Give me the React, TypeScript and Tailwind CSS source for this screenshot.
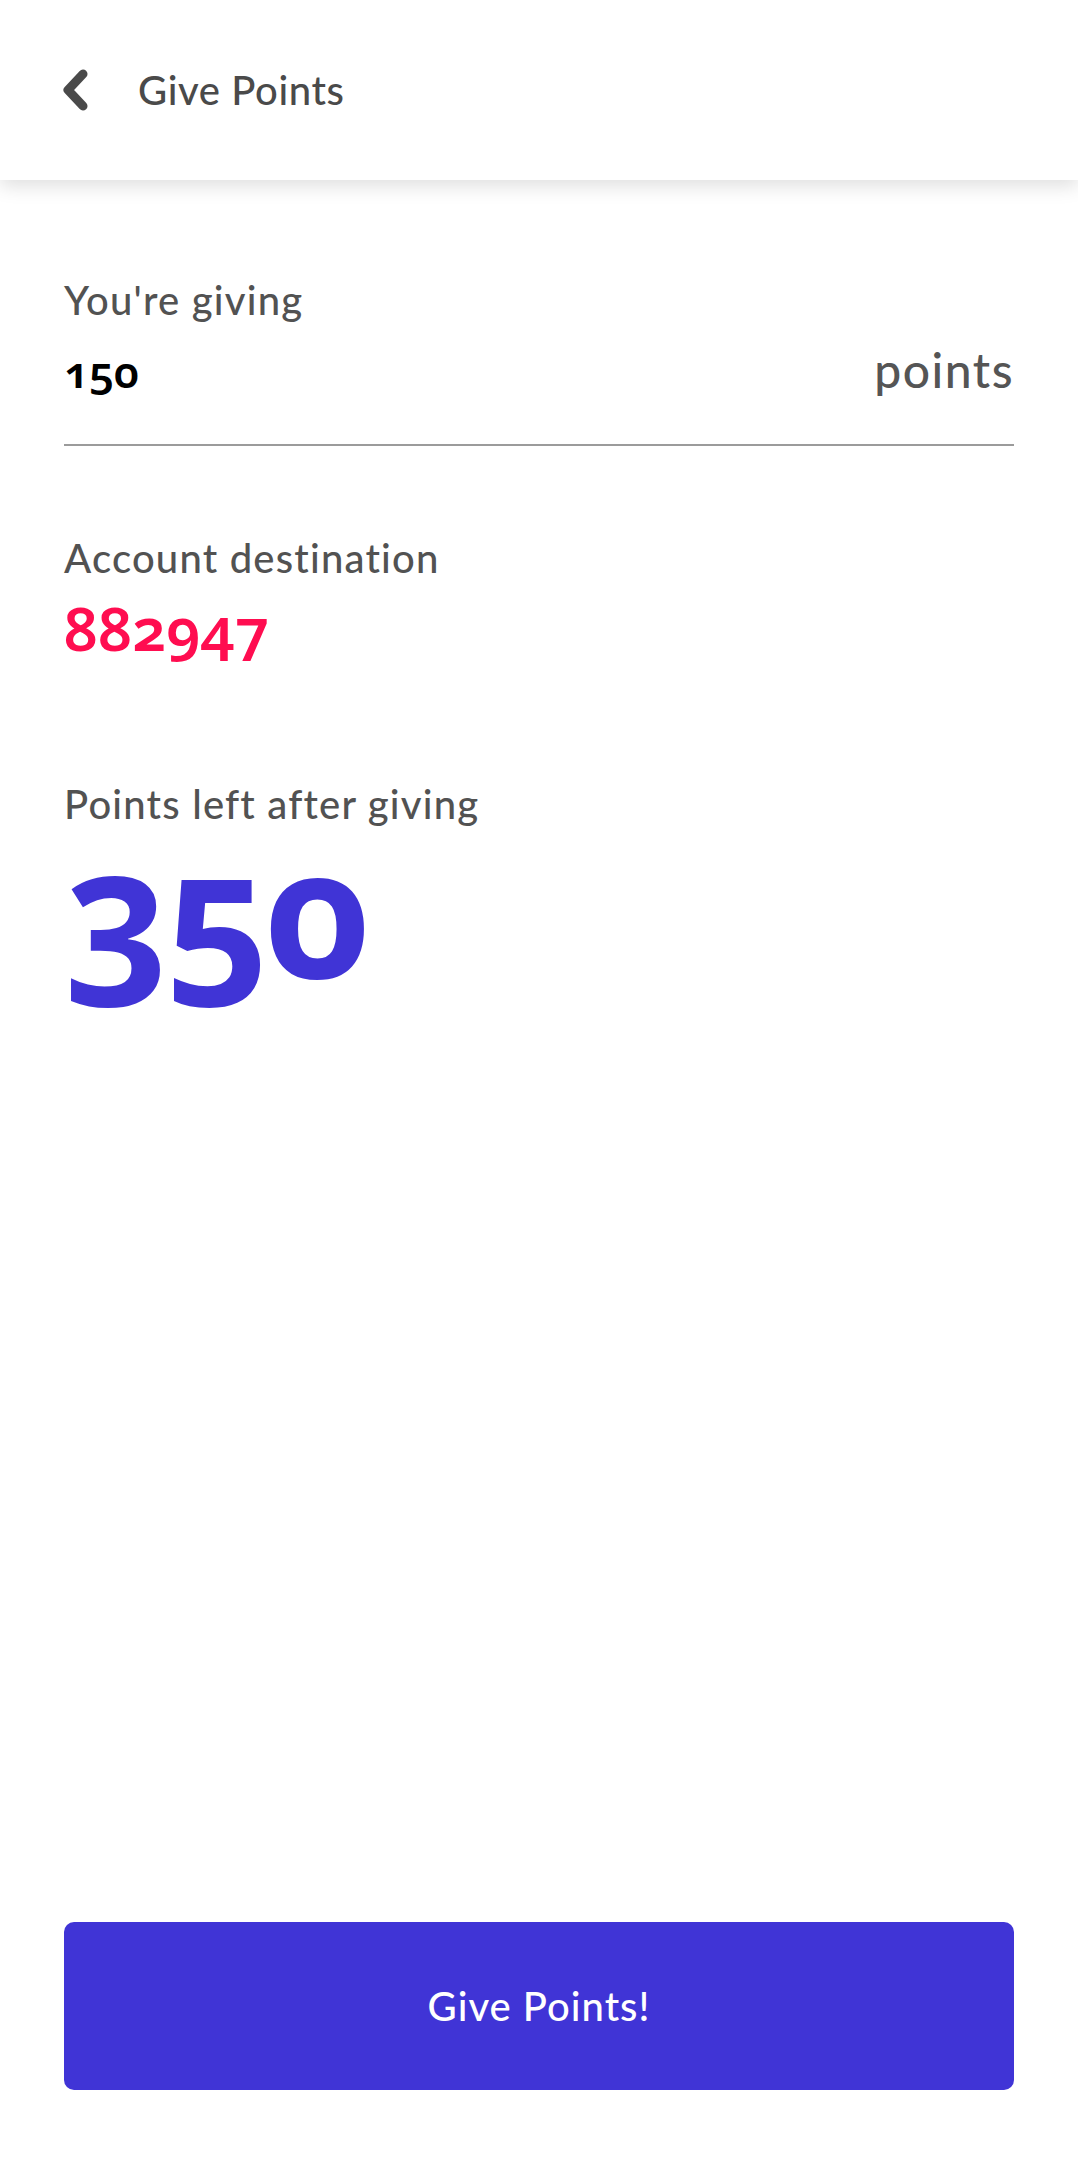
import React from 'react';

const ChevronLeft = () => (
  <svg width="28" height="44" viewBox="0 0 28 44" fill="none">
    <polyline
      points="21,6 6,22 21,38"
      stroke="#4a4a4a"
      strokeWidth="9"
      strokeLinecap="round"
      strokeLinejoin="round"
    />
  </svg>
);

const Label = ({ children, className = '' }: { children: React.ReactNode; className?: string }) => (
  <div className={`text-[40px] leading-none font-medium tracking-[1.2px] text-[#525252] ${className}`}>{children}</div>
);

export default function App() {
  return (
    <div className="min-h-screen flex flex-col bg-white font-['Lato','Noto_Sans',sans-serif]">
      {/* top bar */}
      <header className="relative z-10 h-[180px] flex items-center pl-[62px] bg-white shadow-[0_6px_18px_rgba(0,0,0,0.13)]">
        <ChevronLeft />
        <h1 className="ml-[48px] text-[40px] font-medium tracking-[0.6px] text-[#4a4a4a]">Give Points</h1>
      </header>

      <main className="flex-1 px-16 pt-[100px]">
        {/* amount input */}
        <div className="border-b-2 border-[#9b9b9b] pb-[50px]">
          <Label>You're giving</Label>
          <div className="mt-[26px] flex items-baseline justify-between">
            <span className="font-['Noto_Sans',sans-serif] oldstyle-nums text-[44px] leading-none font-semibold text-black">150</span>
            <span className="text-[48px] leading-none font-medium tracking-[1.5px] text-[#555555]">points</span>
          </div>
        </div>

        <Label className="mt-[92px]">Account destination</Label>
        <div className="mt-[20px] font-['Noto_Sans',sans-serif] oldstyle-nums text-[60px] leading-none font-semibold text-[#ff0d50]">
          882947
        </div>

        <Label className="mt-[126px]">Points left after giving</Label>
        <div className="mt-[15px] font-['Noto_Sans',sans-serif] oldstyle-nums text-[180px] leading-[140px] font-bold text-[#4034d6] tracking-[-4px]">
          350
        </div>
      </main>

      <div className="px-16 pb-[68px]">
        <button className="w-full h-[168px] rounded-[10px] bg-[#4034d6] text-white text-[40px] font-medium tracking-[1px]">
          Give Points!
        </button>
      </div>
    </div>
  );
}
